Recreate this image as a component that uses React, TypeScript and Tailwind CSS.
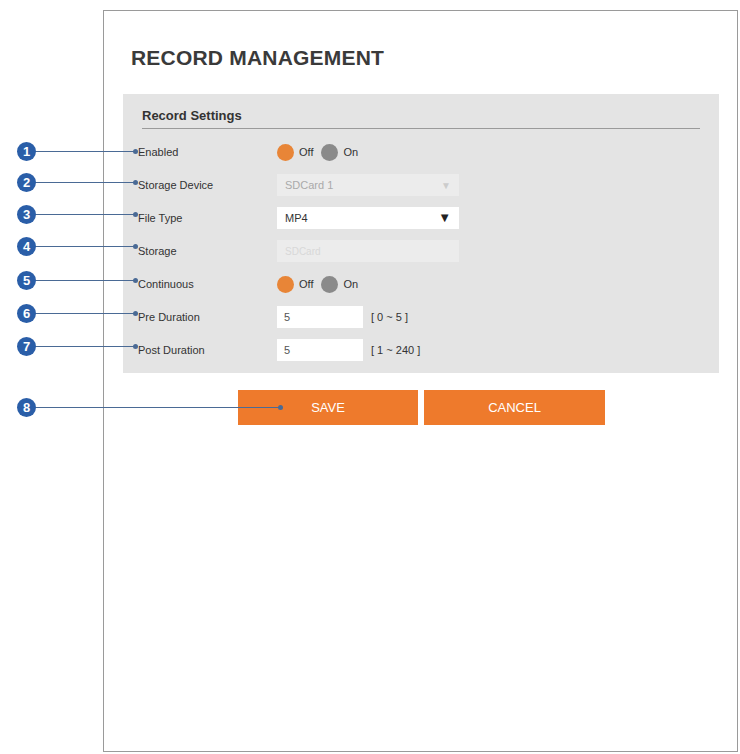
const font = { fontFamily: '"Liberation Sans", Arial, sans-serif' };

function Radio({ on }: { on: boolean }) {
  return (
    <div className="flex items-center gap-[20px] text-[11px] text-[#333]">
      <div className="flex items-center gap-[5px]">
        <span className={`w-[17px] h-[17px] rounded-full ${on ? 'bg-[#8a8a8a]' : 'bg-[#e88537]'}`} />
        <span>Off</span>
      </div>
      <div className="flex items-center gap-[5px] -ml-[12px]">
        <span className={`w-[17px] h-[17px] rounded-full ${on ? 'bg-[#e88537]' : 'bg-[#8a8a8a]'}`} />
        <span>On</span>
      </div>
    </div>
  );
}

function Row({ label, children }: { label: string; children: React.ReactNode }) {
  return (
    <div className="flex items-center h-[33px]">
      <div className="w-[154px] pl-[15px] text-[11px] text-[#333]">{label}</div>
      {children}
    </div>
  );
}

const callouts = [
  { n: 1, y: 151, x2: 135 },
  { n: 2, y: 182, x2: 135 },
  { n: 3, y: 214, x2: 135 },
  { n: 4, y: 246, x2: 135 },
  { n: 5, y: 280, x2: 135 },
  { n: 6, y: 313, x2: 135 },
  { n: 7, y: 346, x2: 135 },
  { n: 8, y: 407, x2: 280 },
];

export default function App() {
  return (
    <div className="relative w-[740px] h-[754px] bg-white" style={font}>
      <div className="absolute left-[103px] top-[10px] w-[635px] h-[742px] border border-[#9a9a9a]" />
      <div className="relative pl-[123px] pt-[42px]">
        <h1 className="pl-[8px] text-[21px] font-bold text-[#3a3a3a] tracking-[0.2px] h-[52px]">RECORD MANAGEMENT</h1>
        <div className="w-[596px] h-[279px] bg-[#e4e4e4] pt-[12px]">
          <div className="ml-[19px] mr-[19px] border-b border-[#9a9a9a] text-[13px] font-bold text-[#333] pb-[2px]">Record Settings</div>
          <div className="pt-[7px]">
            <Row label="Enabled"><Radio on={false} /></Row>
            <Row label="Storage Device">
              <div className="w-[182px] h-[22px] bg-[#ececec] flex items-center justify-between px-[8px] text-[11px] text-[#aaa]">
                SDCard 1<span className="text-[10px] text-[#ccc]">▼</span>
              </div>
            </Row>
            <Row label="File Type">
              <div className="w-[182px] h-[22px] bg-white flex items-center justify-between px-[8px] text-[11px] text-[#333]">
                MP4<span className="text-[13px] text-[#222]">▼</span>
              </div>
            </Row>
            <Row label="Storage">
              <div className="w-[182px] h-[22px] bg-[#ececec] flex items-center px-[8px] text-[10px] text-[#d8d8d8]">SDCard</div>
            </Row>
            <Row label="Continuous"><Radio on={false} /></Row>
            <Row label="Pre Duration">
              <div className="w-[86px] h-[22px] bg-white flex items-center px-[7px] text-[11px] text-[#555]">5</div>
              <span className="ml-[8px] text-[11px] text-[#333]">[ 0 ~ 5 ]</span>
            </Row>
            <Row label="Post Duration">
              <div className="w-[86px] h-[22px] bg-white flex items-center px-[7px] text-[11px] text-[#555]">5</div>
              <span className="ml-[8px] text-[11px] text-[#333]">[ 1 ~ 240 ]</span>
            </Row>
          </div>
        </div>
        <div className="flex gap-[6px] ml-[115px] mt-[17px]">
          <button className="w-[180px] h-[35px] bg-[#ee7a2c] text-white text-[13px]">SAVE</button>
          <button className="w-[181px] h-[35px] bg-[#ee7a2c] text-white text-[13px]">CANCEL</button>
        </div>
      </div>
      {callouts.map((c) => (
        <div key={c.n}>
          <div className="absolute h-px bg-[#4a6a95]" style={{ left: 26, top: c.y, width: c.x2 - 26 }} />
          <div className="absolute w-[5px] h-[5px] rounded-full bg-[#4a6a95]" style={{ left: c.x2 - 2, top: c.y - 2 }} />
          <div
            className="absolute w-[19px] h-[19px] rounded-full bg-[#2a5ea8] text-white text-[13px] font-bold flex items-center justify-center"
            style={{ left: 17, top: c.y - 9 }}
          >
            {c.n}
          </div>
        </div>
      ))}
    </div>
  );
}
